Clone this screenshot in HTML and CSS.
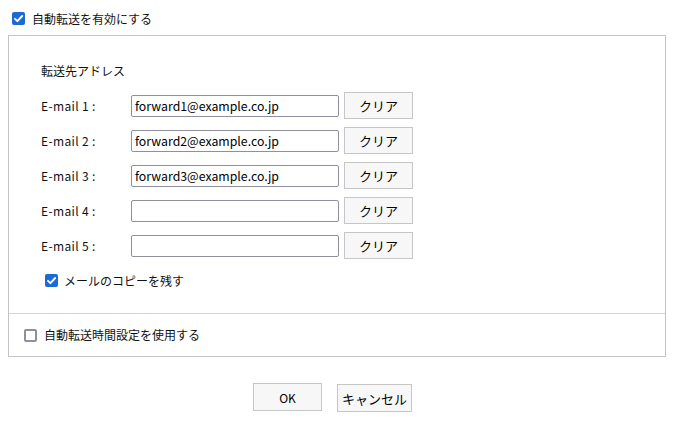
FILE: index.html
```html
<!DOCTYPE html>
<html lang="ja">
<head>
<meta charset="utf-8">
<link rel="stylesheet" href="styles.css">
</head>
<body>
<div class="page">
  <label class="check top-check">
    <span class="cb checked"><svg viewBox="0 0 13 13" width="13" height="13"><path d="M3 6.8 L5.4 9.2 L10.2 4" fill="none" stroke="#fff" stroke-width="1.9" stroke-linecap="round" stroke-linejoin="round"/></svg></span>
    <span class="cb-text">自動転送を有効にする</span>
  </label>
  <div class="panel">
    <div class="panel-main">
      <div class="heading">転送先アドレス</div>
      <div class="row"><span class="lbl">E-mail 1 :</span><div class="field">forward1@example.co.jp</div><button class="btn clear">クリア</button></div>
      <div class="row"><span class="lbl">E-mail 2 :</span><div class="field">forward2@example.co.jp</div><button class="btn clear">クリア</button></div>
      <div class="row"><span class="lbl">E-mail 3 :</span><div class="field">forward3@example.co.jp</div><button class="btn clear">クリア</button></div>
      <div class="row"><span class="lbl">E-mail 4 :</span><div class="field"></div><button class="btn clear">クリア</button></div>
      <div class="row"><span class="lbl">E-mail 5 :</span><div class="field"></div><button class="btn clear">クリア</button></div>
      <label class="check copy-check">
        <span class="cb checked"><svg viewBox="0 0 13 13" width="13" height="13"><path d="M3 6.8 L5.4 9.2 L10.2 4" fill="none" stroke="#fff" stroke-width="1.9" stroke-linecap="round" stroke-linejoin="round"/></svg></span>
        <span class="cb-text">メールのコピーを残す</span>
      </label>
    </div>
    <div class="panel-foot">
      <label class="check">
        <span class="cb"></span>
        <span class="cb-text">自動転送時間設定を使用する</span>
      </label>
    </div>
  </div>
  <div class="actions">
    <button class="btn ok">OK</button>
    <button class="btn cancel">キャンセル</button>
  </div>
</div>
</body>
</html>
```

FILE: styles.css
```css
* { box-sizing: border-box; }
html, body { margin: 0; padding: 0; background: #fff; }
body {
  font-family: "Noto Sans CJK JP", "Noto Sans", sans-serif;
  font-size: 12px;
  color: #111;
}
.page { width: 674px; height: 426px; }

.check { display: flex; align-items: center; gap: 6px; }
.cb {
  width: 13px; height: 13px;
  border: 2px solid #8f8f9d;
  border-radius: 2px;
  display: inline-flex; align-items: center; justify-content: center;
  flex: none;
  background: #fff;
}
.cb.checked { background: #1b6ad8; border: none; border-radius: 2px; }
.cb svg { display: block; }
.cb-text { line-height: 16px; }

.top-check { padding: 11px 0 0 12px; height: 35px; align-items: flex-start; }
.top-check .cb { margin-top: 1px; }
.top-check .cb-text { margin-left: 1px; }

.panel {
  margin: 0 8px;
  width: 658px;
  border: 1px solid #c4c4c4;
  height: 322px;
  display: flex; flex-direction: column;
}
.panel-main {
  padding: 17px 0 0 32px;
  height: 278px;
  border-bottom: 1px solid #d4d4d4;
}
.heading { height: 35px; display: flex; align-items: center; }
.row { height: 35px; display: flex; align-items: center; }
.lbl { width: 90px; flex: none; letter-spacing: 0.35px; }
.field {
  width: 208px; height: 22px;
  border: 1px solid #8f8f9d;
  border-radius: 2px;
  padding: 0 3px;
  font-size: 12.3px;
  line-height: 20px;
  color: #000;
}
.btn {
  font-family: "Noto Sans CJK JP", "Noto Sans", sans-serif;
  font-size: 13px;
  color: #000;
  background: #f7f7f7;
  border: 1px solid #c6c6c6;
  border-radius: 0;
  padding: 0;
}
.clear { width: 69px; height: 27px; margin-left: 5px; }
.copy-check { height: 35px; padding-left: 4px; }

.panel-foot {
  flex: 1;
  display: flex; align-items: center;
  padding-left: 15px;
}
.panel-foot .check { gap: 7px; }

.actions {
  display: flex; justify-content: center; gap: 15px;
  margin-top: 26px;
  padding-right: 9px;
}
.ok { width: 69px; height: 28px; font-size: 12px; }
.cancel { width: 75px; height: 28px; font-size: 13px; margin-top: 1px; }
```
